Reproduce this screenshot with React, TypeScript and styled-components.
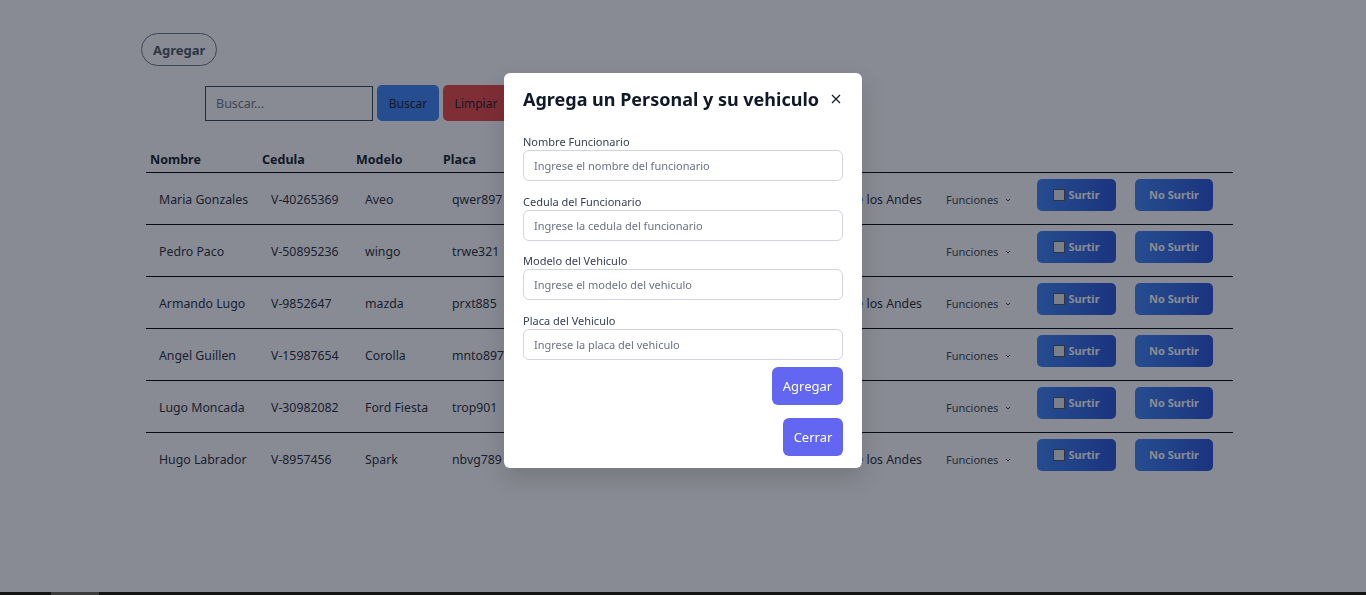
import React from "react";
import styled, { createGlobalStyle } from "styled-components";

const GlobalStyle = createGlobalStyle`
  body {
    margin: 0;
    background: #ffffff;
    font-family: "Noto Sans", "Open Sans", sans-serif;
    color: #111827;
  }
  * { box-sizing: border-box; }
`;

const Page = styled.div`
  height: 595px;
  overflow: hidden;
  padding: 33px 0 0 141px;
`;

const PillButton = styled.button`
  height: 33px;
  padding: 0 11px;
  border: 1px solid #6b7280;
  border-radius: 999px;
  background: transparent;
  font-family: inherit;
  font-size: 13px;
  font-weight: 700;
  color: #4b5563;
`;

const SearchRow = styled.div`
  display: flex;
  align-items: center;
  gap: 4px;
  margin: 19px 0 0 64px;
`;

const SearchInput = styled.input`
  width: 168px;
  height: 35px;
  padding: 0 10px;
  border: 1px solid #374151;
  font-family: inherit;
  font-size: 12.5px;
  &::placeholder { color: #6b7280; }
`;

const ActionButton = styled.button<{ $bg: string; $w: number }>`
  width: ${(p) => p.$w}px;
  height: 36px;
  border: none;
  border-radius: 5px;
  background: ${(p) => p.$bg};
  color: #111827;
  font-family: inherit;
  font-size: 12px;
`;

const Table = styled.table`
  margin: 27px 0 0 5px;
  width: 1087px;
  table-layout: fixed;
  border-collapse: collapse;
`;

const Th = styled.th`
  padding: 0 4px;
  height: 24px;
  text-align: left;
  font-size: 12.5px;
  font-weight: 700;
  color: #111827;
  border-bottom: 1px solid #000;
`;

const Tr = styled.tr`
  & + & td { border-top: 1px solid #000; }
`;

const Td = styled.td<{ $right?: boolean }>`
  height: 52px;
  padding: 3px 13px 0;
  font-size: 12.3px;
  color: #1f2937;
  white-space: nowrap;
  overflow: hidden;
  text-align: ${(p) => (p.$right ? "right" : "left")};
  ${(p) => (p.$right ? "padding-right: 11px;" : "")}
`;

const BtnCell = styled.td<{ $pl: number }>`
  height: 52px;
  padding: 0 0 0 ${(p) => p.$pl}px;
  vertical-align: middle;
`;

const Funciones = styled.span`
  display: inline-flex;
  align-items: center;
  gap: 6px;
  font-size: 11px;
  color: #374151;
`;

const SurtirButton = styled.button<{ $w: number }>`
  display: flex;
  align-items: center;
  justify-content: center;
  gap: 3px;
  width: ${(p) => p.$w}px;
  height: 32px;
  margin-top: -7px;
  border: none;
  border-radius: 5px;
  background: linear-gradient(90deg, #3b82f6, #2450d8);
  color: #ffffff;
  font-family: inherit;
  font-size: 11px;
  font-weight: 700;
`;

const Check = styled.span`
  width: 12px;
  height: 12px;
  background: #e5e7eb;
  border: 1px solid #4b5563;
`;

const Overlay = styled.div`
  position: fixed;
  inset: 0;
  background: rgba(17, 24, 39, 0.5);
`;

const Modal = styled.div`
  position: fixed;
  top: 73px;
  left: 50%;
  transform: translateX(-50%);
  width: 358px;
  padding: 12px 19px 12px;
  background: #ffffff;
  border-radius: 6px;
  box-shadow: 0 10px 25px rgba(0, 0, 0, 0.15);
`;

const ModalHeader = styled.div`
  display: flex;
  align-items: center;
  justify-content: space-between;
  height: 28px;
  margin-bottom: 21px;
`;

const Title = styled.h2`
  margin: 0;
  font-size: 18px;
  font-weight: 700;
  color: #111827;
`;

const CloseIcon = styled.svg`
  width: 10px;
  height: 10px;
  margin-right: 2px;
`;

const Field = styled.div`
  display: flex;
  flex-direction: column;
  & + & { margin-top: 12.6px; }
`;

const Label = styled.label`
  height: 16px;
  line-height: 16px;
  font-size: 11px;
  color: #374151;
`;

const FieldInput = styled.input`
  height: 31px;
  padding: 0 10px;
  border: 1px solid #d1d5db;
  border-radius: 6px;
  font-family: inherit;
  font-size: 11px;
  &::placeholder { color: #6b7280; }
`;

const Footer = styled.div`
  display: flex;
  flex-direction: column;
  align-items: flex-end;
  gap: 13px;
  margin-top: 7px;
`;

const PrimaryButton = styled.button<{ $w: number }>`
  width: ${(p) => p.$w}px;
  height: 38px;
  border: none;
  border-radius: 6px;
  background: #6366f1;
  color: #ffffff;
  font-family: inherit;
  font-size: 13px;
`;

const ScrollStrip = styled.div`
  position: fixed;
  left: 0;
  right: 0;
  bottom: 0;
  height: 3px;
  background: #141414;
`;

const ScrollThumb = styled.div`
  margin-left: 51px;
  width: 48px;
  height: 3px;
  background: #3c3c3c;
`;

const rows = [
  ["Maria Gonzales", "V-40265369", "Aveo", "qwer897", "Universidad de los Andes"],
  ["Pedro Paco", "V-50895236", "wingo", "trwe321", ""],
  ["Armando Lugo", "V-9852647", "mazda", "prxt885", "Universidad de los Andes"],
  ["Angel Guillen", "V-15987654", "Corolla", "mnto897", ""],
  ["Lugo Moncada", "V-30982082", "Ford Fiesta", "trop901", ""],
  ["Hugo Labrador", "V-8957456", "Spark", "nbvg789", ""],
];
rows[5][4] = "Universidad de los Andes";

const widths = [112, 94, 87, 101, 393, 95, 97, 108];

const fields = [
  ["Nombre Funcionario", "Ingrese el nombre del funcionario"],
  ["Cedula del Funcionario", "Ingrese la cedula del funcionario"],
  ["Modelo del Vehiculo", "Ingrese el modelo del vehiculo"],
  ["Placa del Vehiculo", "Ingrese la placa del vehiculo"],
];

const Chevron = () => (
  <svg width="8" height="8" viewBox="0 0 24 24" fill="none" stroke="#374151" strokeWidth="3">
    <path d="M6 9l6 6 6-6" />
  </svg>
);

const App = () => {
  return (
    <>
      <GlobalStyle />
      <Page>
        <PillButton>Agregar</PillButton>
        <SearchRow>
          <SearchInput placeholder="Buscar..." />
          <ActionButton $bg="#3b82f6" $w={62}>Buscar</ActionButton>
          <ActionButton $bg="#ef4444" $w={66}>Limpiar</ActionButton>
        </SearchRow>
        <Table>
          <colgroup>
            {widths.map((w, i) => (
              <col key={i} style={{ width: w }} />
            ))}
          </colgroup>
          <thead>
            <tr>
              <Th>Nombre</Th>
              <Th>Cedula</Th>
              <Th>Modelo</Th>
              <Th>Placa</Th>
              <Th />
              <Th />
              <Th />
              <Th />
            </tr>
          </thead>
          <tbody>
            {rows.map((r) => (
              <Tr key={r[1]}>
                <Td>{r[0]}</Td>
                <Td>{r[1]}</Td>
                <Td>{r[2]}</Td>
                <Td>{r[3]}</Td>
                <Td $right>{r[4]}</Td>
                <BtnCell $pl={13}>
                  <Funciones>
                    Funciones <Chevron />
                  </Funciones>
                </BtnCell>
                <BtnCell $pl={9}>
                  <SurtirButton $w={79}>
                    <Check />
                    Surtir
                  </SurtirButton>
                </BtnCell>
                <BtnCell $pl={10}>
                  <SurtirButton $w={78}>No Surtir</SurtirButton>
                </BtnCell>
              </Tr>
            ))}
          </tbody>
        </Table>
      </Page>
      <Overlay />
      <Modal>
        <ModalHeader>
          <Title>Agrega un Personal y su vehiculo</Title>
          <CloseIcon viewBox="0 0 10 10" fill="none" stroke="#111827" strokeWidth="1.2">
            <path d="M1 1l8 8M9 1l-8 8" />
          </CloseIcon>
        </ModalHeader>
        {fields.map(([label, ph]) => (
          <Field key={label}>
            <Label>{label}</Label>
            <FieldInput placeholder={ph} />
          </Field>
        ))}
        <Footer>
          <PrimaryButton $w={71}>Agregar</PrimaryButton>
          <PrimaryButton $w={60}>Cerrar</PrimaryButton>
        </Footer>
      </Modal>
      <ScrollStrip>
        <ScrollThumb />
      </ScrollStrip>
    </>
  );
};

export default App;
